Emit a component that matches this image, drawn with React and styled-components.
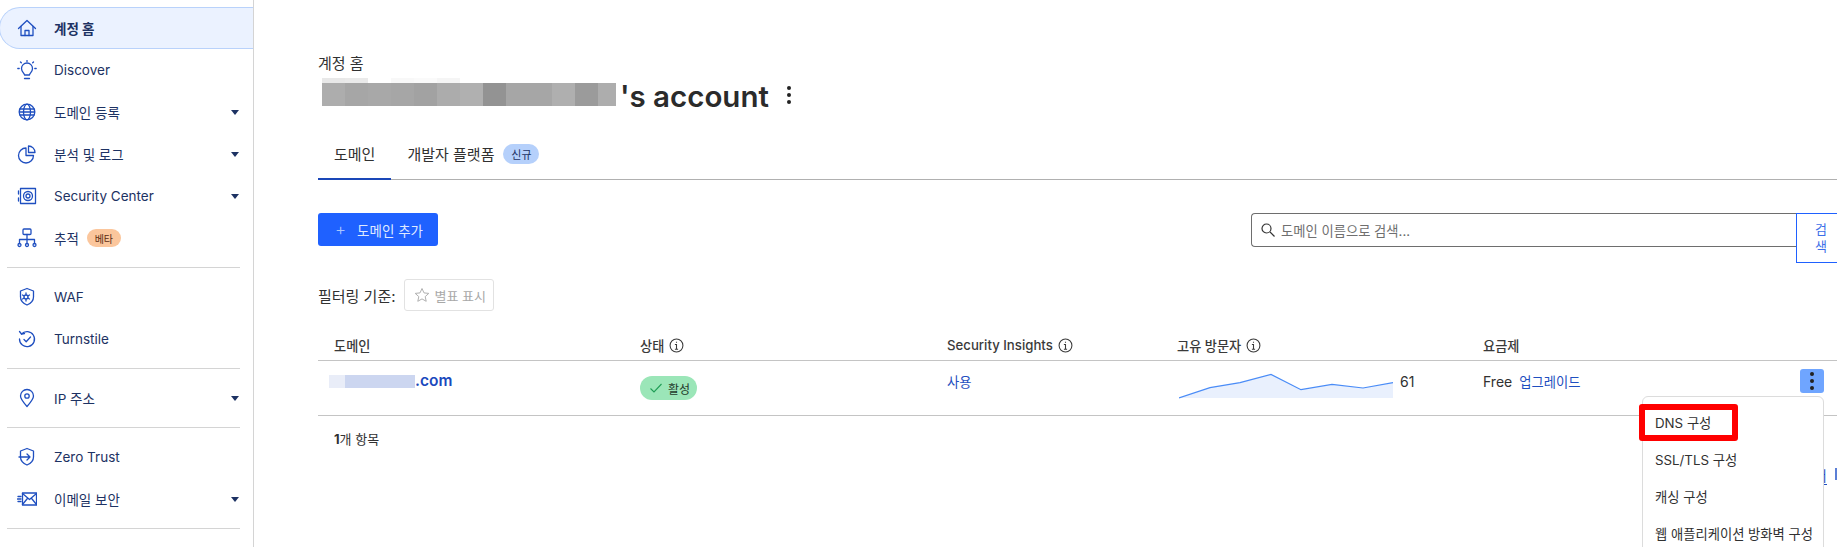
import React from "react";
import styled, { createGlobalStyle } from "styled-components";

const FONT = `Inter, "Noto Sans CJK KR", "Noto Sans", sans-serif`;
const NAVY = "#1d3263";
const BLUE = "#1f4fc0";
const TEXT = "#313131";

const GlobalStyle = createGlobalStyle`
  html, body { margin: 0; padding: 0; height: 547px; overflow: hidden; background: #fff; }
  body { font-family: ${FONT}; color: ${TEXT}; }
  * { box-sizing: border-box; }
`;

const Page = styled.div`
  display: flex;
  width: 1837px;
  height: 547px;
  overflow: hidden;
`;

const Sidebar = styled.nav`
  flex: 0 0 254px;
  height: 547px;
  padding-top: 7px;
  border-right: 1px solid #d4d4d4;
`;

const NavItem = styled.div`
  display: flex;
  align-items: center;
  gap: 17px;
  height: 42px;
  padding: 0 14px 0 17px;
  font-size: 13.5px;
  color: ${NAVY};
  font-weight: ${(p) => (p.$active ? 700 : 400)};
  background: ${(p) => (p.$active ? "#ebf2ff" : "transparent")};
  border: ${(p) => (p.$active ? "1px solid #b9d2fb" : "none")};
  border-right: none;
  border-radius: ${(p) => (p.$active ? "21px 0 0 21px" : "0")};
  margin-left: ${(p) => (p.$active ? "-1px" : "0")};
`;

const NavLabel = styled.span`
  display: flex;
  align-items: center;
  gap: 8px;
  flex: 1;
`;

const Caret = styled.span`
  width: 0;
  height: 0;
  border-left: 4px solid transparent;
  border-right: 4px solid transparent;
  border-top: 5px solid ${NAVY};
`;

const Beta = styled.span`
  display: inline-flex;
  align-items: center;
  justify-content: center;
  width: 34px;
  height: 18px;
  border-radius: 9px;
  background: #fbc69c;
  color: #5b2c12;
  font-size: 10px;
`;

const NavDivider = styled.hr`
  height: 1px;
  margin: 8px 13px 8px 7px;
  border: none;
  background: #d4d4d4;
`;

const Glyph = styled.svg`
  flex: 0 0 20px;
  width: 20px;
  height: 20px;
  fill: none;
  stroke: ${BLUE};
  stroke-width: 1.3;
  stroke-linecap: round;
  stroke-linejoin: round;
`;

const icons = {
  home: <><path d="M1.5 10.5 10 2.5l8.5 8" /><path d="M4 8.5v9h12v-9" /><path d="M8 17.5v-5h4v5" /></>,
  bulb: <><path d="M7.5 15c-.2-1.7-3-3.2-3-6.5a5.5 5.5 0 0 1 11 0c0 3.3-2.8 4.8-3 6.5z" /><path d="M7.5 18.5h5" /><path d="M10 .5v1M3.5 2l.8.8M16.5 2l-.8.8M.8 8.5h1.4M17.8 8.5h1.4" /></>,
  globe: <><circle cx="10" cy="10" r="7.8" /><ellipse cx="10" cy="10" rx="3.5" ry="7.8" /><path d="M3 7h14M3 13h14M2.5 10h15" /></>,
  pie: <><path d="M9 4a7.5 7.5 0 1 0 7.5 7.5H9z" /><path d="M11.5 2A6.5 6.5 0 0 1 18 8.5h-6.5z" /></>,
  safe: <><rect x="3.5" y="2.5" width="15" height="15" /><circle cx="11" cy="10" r="4.5" /><circle cx="11" cy="10" r="2" /><path d="M1.5 5v3M1.5 12v3" /></>,
  org: <><rect x="6" y="1" width="8" height="5.5" rx="1" /><path d="M10 6.5v9M2.5 15.500v-4h15v4" /><circle cx="2.5" cy="17" r="1.5" /><circle cx="10" cy="17" r="1.5" /><circle cx="17.5" cy="17" r="1.5" /></>,
  waf: <><path d="M10 1.5 16.500 4v6c0 4-3 6.500-6.500 8-3.500-1.500-6.500-4-6.500-8V4z" /><circle cx="9" cy="10" r="2" /><path d="M9 6v1.5M9 12.500V14M5.500 8l1.300.8M11.200 11.200l1.300.8M5.500 12l1.300-.8M11.200 8.800l1.300-.8" /></>,
  turnstile: <><path d="M4.5 5a7.5 7.5 0 1 1-2 5" /><path d="M2.5 2.5 4.500 5l3-.5" /><path d="m7 10.500 2.200 2.200L13.500 8" /></>,
  pin: <><path d="M10 18.500C6 14 3.500 11 3.500 8a6.500 6.500 0 0 1 13 0c0 3-2.500 6-6.500 10.500z" /><circle cx="10" cy="8" r="2.200" /></>,
  zero: <><path d="M10 1.500 16.500 4v6c0 4-3 6.500-6.500 8-3.500-1.500-6.500-4-6.500-8V4z" /><path d="M2 10h11M10 7l3 3-3 3" /></>,
  mail: <><rect x="5.5" y="4" width="14" height="12" /><path d="m5.500 4.500 7 6 7-6M5.500 15.500l5.300-6.500M19.500 15.500 14.200 9" /><path d="M1 7.500h3M.5 10h3.500M1 12.500h3" /></>,
};

function Icon({ name }) {
  return <Glyph viewBox="0 0 20 20">{icons[name]}</Glyph>;
}

const navGroups = [
  [
    { icon: "home", label: "계정 홈", active: true },
    { icon: "bulb", label: "Discover" },
    { icon: "globe", label: "도메인 등록", caret: true },
    { icon: "pie", label: "분석 및 로그", caret: true },
    { icon: "safe", label: "Security Center", caret: true },
    { icon: "org", label: "추적", beta: true },
  ],
  [
    { icon: "waf", label: "WAF" },
    { icon: "turnstile", label: "Turnstile" },
  ],
  [{ icon: "pin", label: "IP 주소", caret: true }],
  [
    { icon: "zero", label: "Zero Trust" },
    { icon: "mail", label: "이메일 보안", caret: true },
  ],
];

const Main = styled.main`
  flex: 1;
  min-width: 0;
  padding: 54px 0 0 64px;
  overflow: hidden;
`;

const Crumb = styled.div`
  height: 20px;
  font-size: 15px;
  line-height: 20px;
`;

const TitleRow = styled.div`
  display: flex;
  align-items: center;
  height: 42px;
`;

const Redaction = styled.div`
  display: flex;
  flex-direction: column;
  margin: ${(p) => p.$margin};
`;

const SwatchRow = styled.div`
  display: flex;
`;

const Swatch = styled.span`
  display: block;
  width: ${(p) => p.$w}px;
  height: ${(p) => p.$h}px;
  background: ${(p) => p.$c};
`;

const Title = styled.h1`
  margin: 2px 0 0 4px;
  font-size: 29.5px;
  line-height: 42px;
  font-weight: 600;
  color: #2b2b2b;
`;

const Dots = styled.span`
  display: flex;
  flex-direction: column;
  gap: 3px;
  margin-left: ${(p) => p.$ml};
  span {
    width: 4px;
    height: 4px;
    border-radius: 50%;
    background: #222;
  }
`;

const Tabs = styled.div`
  display: flex;
  align-items: stretch;
  height: 51px;
  margin-top: 13px;
  border-bottom: 1px solid #b0b0b0;
`;

const Tab = styled.div`
  display: flex;
  align-items: center;
  gap: 9px;
  padding: 0 16px;
  margin-bottom: -1px;
  font-size: 15px;
  border-bottom: ${(p) => (p.$active ? `2px solid #1a47b8` : "2px solid transparent")};
`;

const NewBadge = styled.span`
  display: inline-flex;
  align-items: center;
  justify-content: center;
  width: 36px;
  height: 20px;
  border-radius: 10px;
  background: #b5d0fb;
  color: ${NAVY};
  font-size: 11px;
`;

const Toolbar = styled.div`
  display: flex;
  justify-content: space-between;
  align-items: flex-start;
  margin: 33px -9px 0 0;
`;

const AddButton = styled.button`
  display: flex;
  align-items: center;
  gap: 11px;
  width: 120px;
  height: 33px;
  padding: 0 0 0 17px;
  border: none;
  border-radius: 3px;
  background: #1f61ff;
  color: #dfe9ff;
  font: 400 13.5px ${FONT};
`;

const Plus = styled.span`
  font-size: 17px;
  font-weight: 300;
  line-height: 1;
  color: #a9c5ff;
`;

const SearchGroup = styled.div`
  display: flex;
  align-items: flex-start;
  width: 595px;
`;

const SearchBox = styled.div`
  display: flex;
  align-items: center;
  gap: 6px;
  flex: 1;
  height: 34px;
  padding-left: 9px;
  border: 1px solid #6e6e6e;
  border-right: none;
  border-radius: 4px 0 0 4px;
  font-size: 13.3px;
  color: #6f6f6f;
`;

const SearchButton = styled.button`
  flex: 0 0 50px;
  height: 50px;
  padding: 0 16px;
  border: 1px solid #1f61ff;
  background: #fff;
  color: #3d6fe8;
  font: 400 13px/17px ${FONT};
  word-break: break-all;
`;

const FilterRow = styled.div`
  display: flex;
  align-items: center;
  gap: 8px;
  margin-top: 16px;
  font-size: 15px;
`;

const StarButton = styled.div`
  display: flex;
  align-items: center;
  gap: 5px;
  width: 90px;
  height: 32px;
  padding-left: 9px;
  border: 1px solid #e2e2e2;
  border-radius: 3px;
  color: #a8a8a8;
  font-size: 13px;
`;

const columns = "306px 307px 230px 306px 1fr";

const HeaderRow = styled.div`
  display: grid;
  grid-template-columns: ${columns};
  align-items: end;
  height: 50px;
  padding: 0 0 5px 16px;
  border-bottom: 1px solid #c4c4c4;
`;

const HeaderCell = styled.div`
  display: flex;
  align-items: center;
  gap: 5px;
  height: 20px;
  font-size: 13.2px;
  font-weight: 500;
  color: #3a3a3a;
`;

const InfoIcon = styled.svg`
  width: 15px;
  height: 15px;
  fill: none;
  stroke: #3a3a3a;
  stroke-width: 1;
`;

const BodyRow = styled.div`
  display: grid;
  grid-template-columns: ${columns};
  align-items: start;
  height: 55px;
  padding: 11px 0 0 16px;
  border-bottom: 1px solid #c4c4c4;
`;

const DomainCell = styled.div`
  display: flex;
  align-items: center;
  height: 20px;
  color: #1b49bd;
  font-size: 15.5px;
  font-weight: 600;
`;

const DomainSuffix = styled.span`
  margin-top: -3px;
`;

const StatusPill = styled.span`
  display: inline-flex;
  align-items: center;
  gap: 5px;
  height: 24px;
  width: 57px;
  margin-top: 4px;
  padding-left: 9px;
  border-radius: 12px;
  background: #9be6b8;
  color: #1f3a2b;
  font-size: 12px;
`;

const LinkText = styled.span`
  color: ${BLUE};
  font-size: 13.3px;
  line-height: 20px;
`;

const VisitorCell = styled.div`
  display: flex;
  align-items: flex-start;
  gap: 6px;
  font-size: 14px;
  line-height: 20px;
  margin-left: 2px;
`;

const Spark = styled.svg`
  display: block;
  width: 215px;
  height: 26px;
  margin-top: 1px;
`;

const PlanCell = styled.div`
  position: relative;
  display: flex;
  justify-content: space-between;
  align-items: flex-start;
  padding-right: 13px;
  font-size: 14px;
  line-height: 20px;
`;

const PlanText = styled.span`
  display: flex;
  gap: 7px;
`;

const KebabButton = styled.button`
  display: flex;
  align-items: center;
  justify-content: center;
  width: 24px;
  height: 24px;
  margin-top: -3px;
  padding: 0;
  border: none;
  border-radius: 3px;
  background: #6fa5ff;
`;

const Menu = styled.div`
  position: absolute;
  top: 24px;
  right: 13px;
  z-index: 2;
  width: 182px;
  height: 200px;
  padding-top: 7px;
  border: 1px solid #dcdcdc;
  border-radius: 6px;
  background: #fff;
`;

const MenuItem = styled.div`
  display: flex;
  align-items: center;
  height: 37px;
  padding-left: 12px;
  font-size: 13.3px;
  color: ${TEXT};
  white-space: nowrap;
`;

const Highlight = styled.div`
  position: absolute;
  top: 7px;
  left: -4px;
  width: 99px;
  height: 37px;
  border: 6px solid #f00;
  border-radius: 3px;
`;

const Footer = styled.div`
  display: flex;
  justify-content: space-between;
  align-items: flex-start;
  padding: 13px 0 0 16px;
  font-size: 13px;
  line-height: 20px;
  b { font-weight: 700; }
`;

const PagerLink = styled.span`
  display: flex;
  align-items: flex-start;
  gap: 8px;
  margin: 39px -10px 0 0;
  color: ${BLUE};
  font-size: 14px;
  line-height: 16px;
  white-space: nowrap;
  u { text-decoration: none; border-bottom: 1px solid ${BLUE}; }
`;

const LinkBox = styled.span`
  display: block;
  width: 12px;
  height: 12px;
  border: 2px solid #5b7fd6;
`;

const titleTop = [["#e8e8e8", 23], ["#eaeaea", 23], ["#fff", 23], ["#f8f8f8", 23], ["#fafafa", 23], ["#f5f5f5", 23]];
const titleBlocks = ["#adadad", "#a6a6a6", "#a8a8a8", "#a6a6a6", "#a2a2a2", "#acacac", "#b0b0b0", "#939393", "#a6a6a6", "#a6a6a6", "#afafaf", "#9b9b9b"];

function Info() {
  return (
    <InfoIcon viewBox="0 0 14 14">
      <circle cx="7" cy="7" r="6" />
      <path d="M5.5 6H7v4M5.5 10.5h3M7 3.5v1" />
    </InfoIcon>
  );
}

function Kebab({ ml = "0" }) {
  return (
    <Dots $ml={ml}>
      <span />
      <span />
      <span />
    </Dots>
  );
}

const sparkLine = "0,17 31,6.7 61,1.7 92,-6.6 122,8.7 153,3.4 184,7 214,1.7";

export default function App() {
  return (
    <>
      <GlobalStyle />
      <Page>
        <Sidebar>
          {navGroups.map((group, i) => (
            <React.Fragment key={i}>
              {group.map((item) => (
                <NavItem key={item.label} $active={item.active}>
                  <Icon name={item.icon} />
                  <NavLabel>
                    {item.label}
                    {item.beta && <Beta>베타</Beta>}
                  </NavLabel>
                  {item.caret && <Caret />}
                </NavItem>
              ))}
              <NavDivider />
            </React.Fragment>
          ))}
        </Sidebar>
        <Main>
          <Crumb>계정 홈</Crumb>
          <TitleRow>
            <Redaction $margin="-7px 0 0 4px">
              <SwatchRow>
                {titleTop.map(([c, w], i) => (
                  <Swatch key={i} $c={c} $w={w} $h={5} />
                ))}
              </SwatchRow>
              <SwatchRow>
                {titleBlocks.map((c, i) => (
                  <Swatch key={i} $c={c} $w={23} $h={23} />
                ))}
                <Swatch $c="#adadad" $w={18} $h={23} />
              </SwatchRow>
            </Redaction>
            <Title>'s account</Title>
            <Kebab ml="18px" />
          </TitleRow>
          <Tabs>
            <Tab $active>도메인</Tab>
            <Tab>
              개발자 플랫폼
              <NewBadge>신규</NewBadge>
            </Tab>
          </Tabs>
          <Toolbar>
            <AddButton>
              <Plus>+</Plus>
              도메인 추가
            </AddButton>
            <SearchGroup>
              <SearchBox>
                <svg width="14" height="14" viewBox="0 0 14 14" fill="none" stroke="#333" strokeWidth="1.2">
                  <circle cx="5.5" cy="5.5" r="4.5" />
                  <path d="m9 9 4.5 4.5" />
                </svg>
                도메인 이름으로 검색...
              </SearchBox>
              <SearchButton>검색</SearchButton>
            </SearchGroup>
          </Toolbar>
          <FilterRow>
            필터링 기준:
            <StarButton>
              <svg width="16" height="16" viewBox="0 0 16 16" fill="none" stroke="#b0b0b0" strokeWidth="1">
                <path d="m8 1.5 2 4.4 4.8.5-3.600 3.200 1 4.700L8 11.900l-4.200 2.400 1-4.700L1.200 6.400 6 5.900z" />
              </svg>
              별표 표시
            </StarButton>
          </FilterRow>
          <HeaderRow>
            <HeaderCell>도메인</HeaderCell>
            <HeaderCell>
              상태 <Info />
            </HeaderCell>
            <HeaderCell>
              Security Insights <Info />
            </HeaderCell>
            <HeaderCell>
              고유 방문자 <Info />
            </HeaderCell>
            <HeaderCell>요금제</HeaderCell>
          </HeaderRow>
          <BodyRow>
            <DomainCell>
              <Redaction $margin="-1px 0 0 -5px">
                <SwatchRow>
                  <Swatch $c="#e9edf8" $w={16} $h={13} />
                  <Swatch $c="#ccd6f0" $w={70} $h={13} />
                </SwatchRow>
              </Redaction>
              <DomainSuffix>.com</DomainSuffix>
            </DomainCell>
            <StatusPill>
              <svg width="14" height="14" viewBox="0 0 14 14" fill="none" stroke="#1f9d55" strokeWidth="1.1">
                <path d="m1.5 7.5 3.5 3.5 7.5-8" />
              </svg>
              활성
            </StatusPill>
            <LinkText>사용</LinkText>
            <VisitorCell>
              <Spark viewBox="0 -8 215 26">
                <polygon points={`${sparkLine} 214,17`} fill="#e9f0fd" />
                <polyline points={sparkLine} fill="none" stroke="#4a8cf7" strokeWidth="1.2" />
              </Spark>
              61
            </VisitorCell>
            <PlanCell>
              <PlanText>
                Free <LinkText>업그레이드</LinkText>
              </PlanText>
              <KebabButton>
                <Kebab />
              </KebabButton>
              <Menu>
                <MenuItem>DNS 구성</MenuItem>
                <MenuItem>SSL/TLS 구성</MenuItem>
                <MenuItem>캐싱 구성</MenuItem>
                <MenuItem>웹 애플리케이션 방화벽 구성</MenuItem>
                <Highlight />
              </Menu>
            </PlanCell>
          </BodyRow>
          <Footer>
            <span>
              <b>1</b>개 항목
            </span>
            <PagerLink>
              <u>추가 도메인 문서</u>
              <LinkBox />
            </PagerLink>
          </Footer>
        </Main>
      </Page>
    </>
  );
}
